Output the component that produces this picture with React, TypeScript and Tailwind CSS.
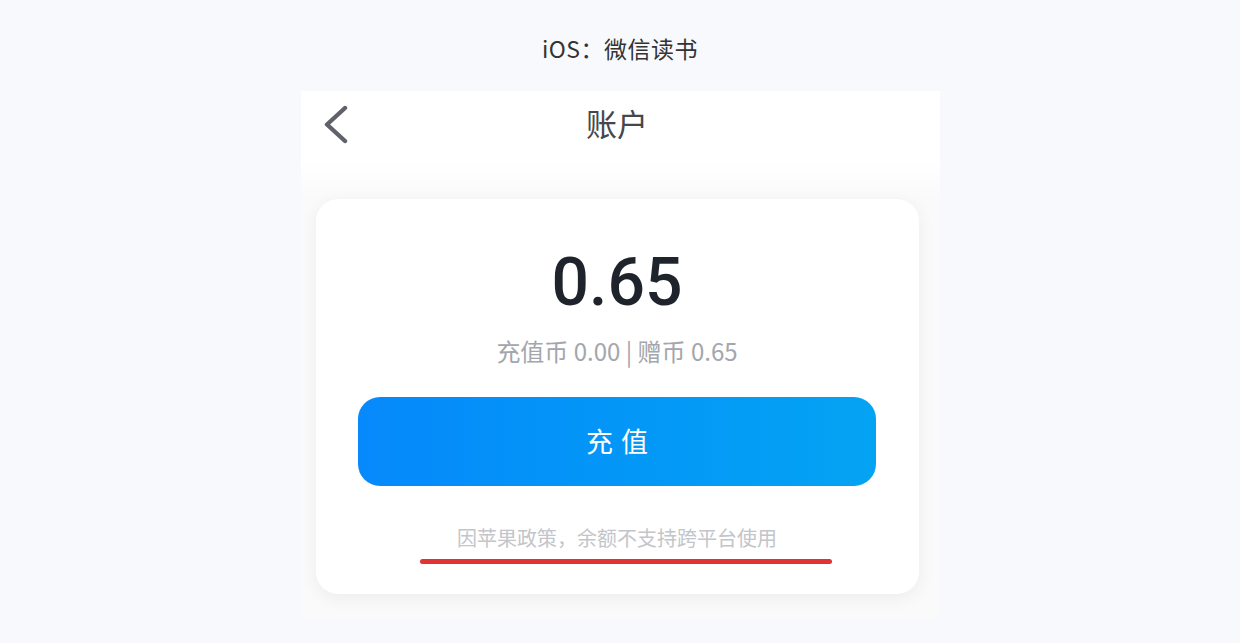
const cjk = '"Noto Sans CJK SC", "Noto Sans", sans-serif'

function BackIcon() {
  return (
    <svg width="28" height="40" viewBox="0 0 28 40" fill="none" className="absolute left-[21px] top-[14px]">
      <polyline points="23,3 5,19.5 23,36" stroke="#5f6268" strokeWidth="4.4" strokeLinecap="round" strokeLinejoin="round" />
    </svg>
  )
}

export default function App() {
  return (
    <div className="min-h-[643px] w-full bg-[#f8f9fd] flex flex-col items-center" style={{ fontFamily: cjk }}>
      <div className="h-[91px] flex items-center justify-center pt-[6px]">
        <h1 className="text-[23px] text-[#333] tracking-[0.5px]">iOS：微信读书</h1>
      </div>

      {/* phone screenshot */}
      <div className="w-[639px] h-[528px] bg-[#fafafa] flex flex-col">
        <div className="h-[68px] bg-white relative flex items-center justify-center">
          <BackIcon />
          <span className="text-[31px] text-[#45474c] mt-[-4px] ml-[-6px]">账户</span>
        </div>
        <div className="h-[40px] bg-gradient-to-b from-white to-[#fafafa]" />

        <div className="mx-[15px] w-[603px] h-[395px] bg-white rounded-[22px] shadow-[0_4px_18px_rgba(0,0,0,0.06)] flex flex-col items-center">
          <div
            className="mt-[51px] text-[66px] leading-none font-medium text-[#1f232b]"
            style={{ fontFamily: 'Roboto, "DejaVu Sans", sans-serif' }}
          >
            0.65
          </div>
          <div className="mt-[23px] text-[24px] leading-none text-[#a3a6ac]">充值币 0.00 | 赠币 0.65</div>
          <button className="mt-[34px] w-[518px] h-[89px] rounded-[22px] bg-gradient-to-r from-[#0789fb] to-[#05a3f3] text-white text-[27px] tracking-[8px] pl-[8px]">
            充值
          </button>
          <div className="mt-[42px] text-[20px] leading-none text-[#c3c5ca]">因苹果政策，余额不支持跨平台使用</div>
          <div className="mt-[11px] ml-[18px] w-[412px] h-[5px] rounded-full bg-[#e03333]" />
        </div>
      </div>
    </div>
  )
}
